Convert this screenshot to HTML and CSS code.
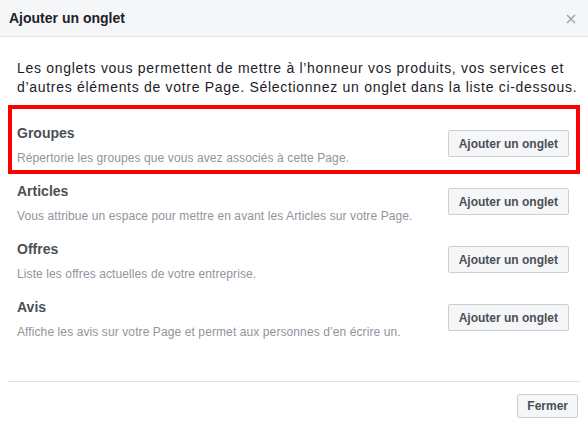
FILE: index.html
```html
<!DOCTYPE html>
<html lang="fr">
<head>
<meta charset="utf-8">
<title>Ajouter un onglet</title>
<link rel="stylesheet" href="styles.css">
</head>
<body>
<div class="dialog">
  <div class="header">
    <h1 class="title">Ajouter un onglet</h1>
    <svg class="close" width="10" height="10" viewBox="0 0 10 10" aria-label="Fermer"><path d="M1 1 L9 9 M9 1 L1 9" stroke="#a3a6ab" stroke-width="1.6" fill="none"/></svg>
  </div>
  <div class="content">
    <p class="intro">Les onglets vous permettent de mettre à l’honneur vos produits, vos services et d’autres éléments de votre Page. Sélectionnez un onglet dans la liste ci-dessous.</p>
    <ul class="list">
      <li class="row highlight">
        <div class="info">
          <div class="name">Groupes</div>
          <div class="desc">Répertorie les groupes que vous avez associés à cette Page.</div>
        </div>
        <button class="btn btn-add">Ajouter un onglet</button>
      </li>
      <li class="row">
        <div class="info">
          <div class="name">Articles</div>
          <div class="desc">Vous attribue un espace pour mettre en avant les Articles sur votre Page.</div>
        </div>
        <button class="btn btn-add">Ajouter un onglet</button>
      </li>
      <li class="row">
        <div class="info">
          <div class="name">Offres</div>
          <div class="desc">Liste les offres actuelles de votre entreprise.</div>
        </div>
        <button class="btn btn-add">Ajouter un onglet</button>
      </li>
      <li class="row">
        <div class="info">
          <div class="name">Avis</div>
          <div class="desc">Affiche les avis sur votre Page et permet aux personnes d’en écrire un.</div>
        </div>
        <button class="btn btn-add">Ajouter un onglet</button>
      </li>
    </ul>
  </div>
  <div class="footer">
    <button class="btn btn-close">Fermer</button>
  </div>
</div>
</body>
</html>
```
FILE: styles.css
```css
* { box-sizing: border-box; }
html, body { margin: 0; padding: 0; background: #fff; }
body {
  font-family: "Liberation Sans", Arial, Helvetica, sans-serif;
  color: #1d2129;
  width: 588px;
  height: 428px;
  overflow: hidden;
}
.dialog {
  display: flex;
  flex-direction: column;
  height: 428px;
}
.header {
  height: 37px;
  background: #f5f6f7;
  border-bottom: 1px solid #e5e5e5;
  display: flex;
  align-items: center;
  justify-content: space-between;
  padding: 0 12px 0 9px;
}
.title {
  margin: 0;
  font-size: 14px;
  font-weight: bold;
  line-height: 18px;
  color: #1d2129;
}
.close { display: block; margin-top: 1px; }
.content {
  padding: 22px 4px 0;
}
.intro {
  margin: 0 5px 0 13px;
  font-size: 14px;
  line-height: 19px;
  letter-spacing: 0.7px;
  color: #1d2129;
}
.list {
  list-style: none;
  margin: 12px 8px 0;
  padding: 0;
}
.row {
  position: relative;
  height: 58px;
  display: flex;
  justify-content: space-between;
  align-items: flex-start;
  padding: 15px 7px 0 5px;
}
.highlight::after {
  content: "";
  position: absolute;
  top: -4px;
  left: -4px;
  right: -4px;
  bottom: -7px;
  border: 4px solid #fe0000;
  pointer-events: none;
}
.info {
  display: flex;
  flex-direction: column;
  gap: 8px;
}
.name {
  font-size: 14px;
  font-weight: bold;
  line-height: 18px;
  color: #4b4f56;
}
.desc {
  font-size: 12px;
  line-height: 16px;
  letter-spacing: 0.1px;
  color: #90949c;
}
.btn {
  font-family: inherit;
  font-size: 12px;
  font-weight: bold;
  color: #4b4f56;
  background: #f5f6f7;
  border: 1px solid #ccd0d5;
  border-radius: 2px;
  cursor: pointer;
}
.btn-add {
  margin-top: 6px;
  height: 27px;
  padding: 0 10px;
}
.footer {
  margin: 40px 8px 0;
  border-top: 1px solid #dddfe2;
  padding: 12px 2px 0 0;
  display: flex;
  justify-content: flex-end;
}
.btn-close {
  height: 24px;
  padding: 0 9px;
}
```
